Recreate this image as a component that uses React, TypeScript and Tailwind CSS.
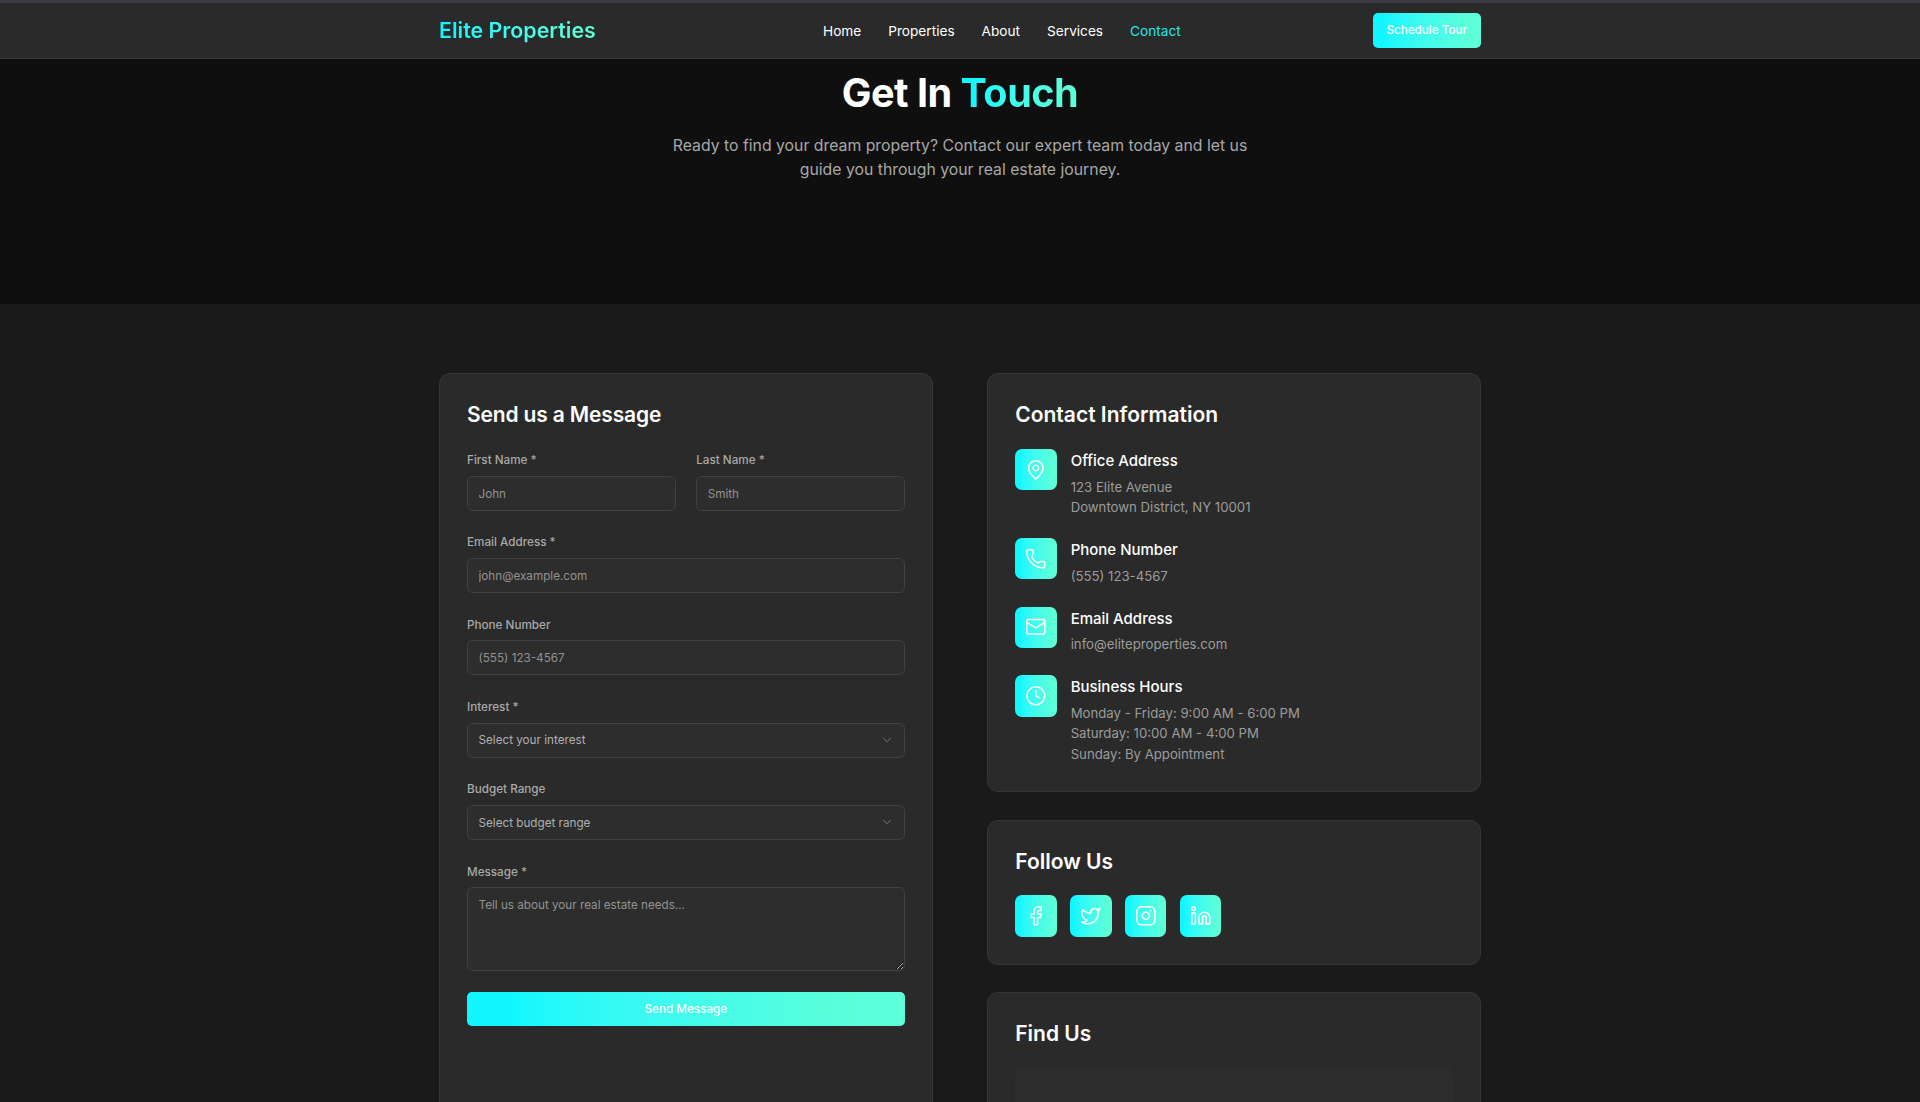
import { ChevronDown, Clock, Facebook, Instagram, Linkedin, Mail, MapPin, Phone, Twitter } from "lucide-react";
import type { ReactNode } from "react";

const grad = "bg-gradient-to-r from-[#12f7ff] from-10% to-[#5cffd8] to-90%";

function Label({ children }: { children: ReactNode }) {
  return <label className="block text-[11.7px] leading-[19px] font-medium text-[#a8a8a8] mb-[5.5px]">{children}</label>;
}

const inputCls =
  "block w-full rounded-[5.5px] border border-[#404045] bg-[#2d2d2d] px-[10.5px] text-[11.7px] text-[#b0b0b0] placeholder:text-[#929292] outline-none";

function Field({ label, placeholder }: { label: string; placeholder: string }) {
  return (
    <div>
      <Label>{label}</Label>
      <input className={`${inputCls} h-[35px] pt-[1px]`} placeholder={placeholder} />
    </div>
  );
}

function SelectField({ label, placeholder }: { label: string; placeholder: string }) {
  return (
    <div>
      <Label>{label}</Label>
      <div className="relative">
        <select className={`${inputCls} h-[35px] pt-[2px] appearance-none text-[#929292]`} defaultValue="">
          <option value="">{placeholder}</option>
        </select>
        <ChevronDown className="absolute right-[11px] top-[10px] w-[14px] h-[14px] text-[#808080]" strokeWidth={1.5} />
      </div>
    </div>
  );
}

function IconBox({ children }: { children: ReactNode }) {
  return <div className={`${grad} shrink-0 w-[41.4px] h-[41.4px] rounded-[7px] flex items-center justify-center text-white`}>{children}</div>;
}

function Info({ icon, title, lines }: { icon: ReactNode; title: string; lines: string[] }) {
  return (
    <div className="flex gap-[14px]">
      <IconBox>{icon}</IconBox>
      <div>
        <div className="text-[15px] leading-[24px] font-medium text-white mb-[3.7px]">{title}</div>
        {lines.map((l) => (
          <div key={l} className="text-[13.2px] leading-[20.4px] text-[#9c9c9c]">{l}</div>
        ))}
      </div>
    </div>
  );
}

const cardCls = "rounded-[11px] border border-[#363636] bg-[#2a2a2a] p-[27px]";
const titleCls = "text-[21px] leading-[27px] font-semibold text-white";
const ic = "w-[21.6px] h-[21.6px]";

export default function App() {
  return (
    <div className="h-[1102px] overflow-hidden bg-[#1a1a1a] font-['Inter',sans-serif]">
      <header className="h-[59px] border-t-[3px] border-t-[#3a3a40] border-b border-b-[#363636] bg-[#2a2a2a]">
        <div className="w-[1042px] mx-auto h-full flex items-center">
          <div className="w-[384px]">
            <span className={`${grad} bg-clip-text text-transparent text-[21.4px] font-semibold whitespace-nowrap`}>Elite Properties</span>
          </div>
          <nav className="flex gap-[27px] pt-[1px] text-[13.65px] font-normal text-white">
            <a>Home</a>
            <a>Properties</a>
            <a>About</a>
            <a>Services</a>
            <a className="text-[#1fe8ea]">Contact</a>
          </nav>
          <button className={`${grad} ml-auto w-[108.5px] h-[34.5px] pt-[1px] rounded-[5px] text-white text-[11.7px] font-medium`}>Schedule Tour</button>
        </div>
      </header>

      <section className="h-[245px] bg-[#0f0f0f] pt-[6px] text-center">
        <h1 className="text-[39.6px] leading-[56px] font-bold text-white tracking-[-0.5px]">
          Get In <span className={`${grad} bg-clip-text text-transparent`}>Touch</span>
        </h1>
        <p className="mt-[12.5px] text-[15.8px] leading-[24.3px] text-[#a8a8a8]">
          Ready to find your dream property? Contact our expert team today and let us
          <br />
          guide you through your real estate journey.
        </p>
      </section>

      <main className="w-[1042px] mx-auto pt-[69px] grid grid-cols-2 gap-[54.5px]">
        <div className={`${cardCls} h-[900px]`}>
          <h2 className={`${titleCls} mb-[23px] tracking-[-0.15px]`}>Send us a Message</h2>
          <div className="flex flex-col gap-[22.85px]">
            <div className="grid grid-cols-2 gap-[20.7px]">
              <Field label="First Name *" placeholder="John" />
              <Field label="Last Name *" placeholder="Smith" />
            </div>
            <Field label="Email Address *" placeholder="john@example.com" />
            <Field label="Phone Number" placeholder="(555) 123-4567" />
            <SelectField label="Interest *" placeholder="Select your interest" />
            <SelectField label="Budget Range" placeholder="Select budget range" />
            <div>
              <Label>Message *</Label>
              <textarea className={`${inputCls} h-[83.5px] pt-[8.5px] pb-[8px] resize-y`} placeholder="Tell us about your real estate needs..." />
            </div>
            <button className={`${grad} -mt-[2px] h-[34.5px] pt-[1px] rounded-[5px] text-white text-[11.7px] font-medium`}>Send Message</button>
          </div>
        </div>

        <div className="flex flex-col gap-[27.6px]">
          <div className={cardCls}>
            <h2 className={`${titleCls} mb-[21px]`}>Contact Information</h2>
            <div className="flex flex-col gap-[20.5px]">
              <Info icon={<MapPin className={ic} strokeWidth={1.7} />} title="Office Address" lines={["123 Elite Avenue", "Downtown District, NY 10001"]} />
              <Info icon={<Phone className={ic} strokeWidth={1.7} />} title="Phone Number" lines={["(555) 123-4567"]} />
              <Info icon={<Mail className={ic} strokeWidth={1.7} />} title="Email Address" lines={["info@eliteproperties.com"]} />
              <Info icon={<Clock className={ic} strokeWidth={1.7} />} title="Business Hours" lines={["Monday - Friday: 9:00 AM - 6:00 PM", "Saturday: 10:00 AM - 4:00 PM", "Sunday: By Appointment"]} />
            </div>
          </div>
          <div className={cardCls}>
            <h2 className={`${titleCls} mb-[20.5px]`}>Follow Us</h2>
            <div className="flex gap-[13.5px]">
              <IconBox><Facebook className={ic} strokeWidth={1.7} /></IconBox>
              <IconBox><Twitter className={ic} strokeWidth={1.7} /></IconBox>
              <IconBox><Instagram className={ic} strokeWidth={1.7} /></IconBox>
              <IconBox><Linkedin className={ic} strokeWidth={1.7} /></IconBox>
            </div>
          </div>
          <div className={cardCls}>
            <h2 className={`${titleCls} mb-[19.5px]`}>Find Us</h2>
            <div className="h-[200px] rounded-[7px] bg-[#2d2d2d]" />
          </div>
        </div>
      </main>
    </div>
  );
}
